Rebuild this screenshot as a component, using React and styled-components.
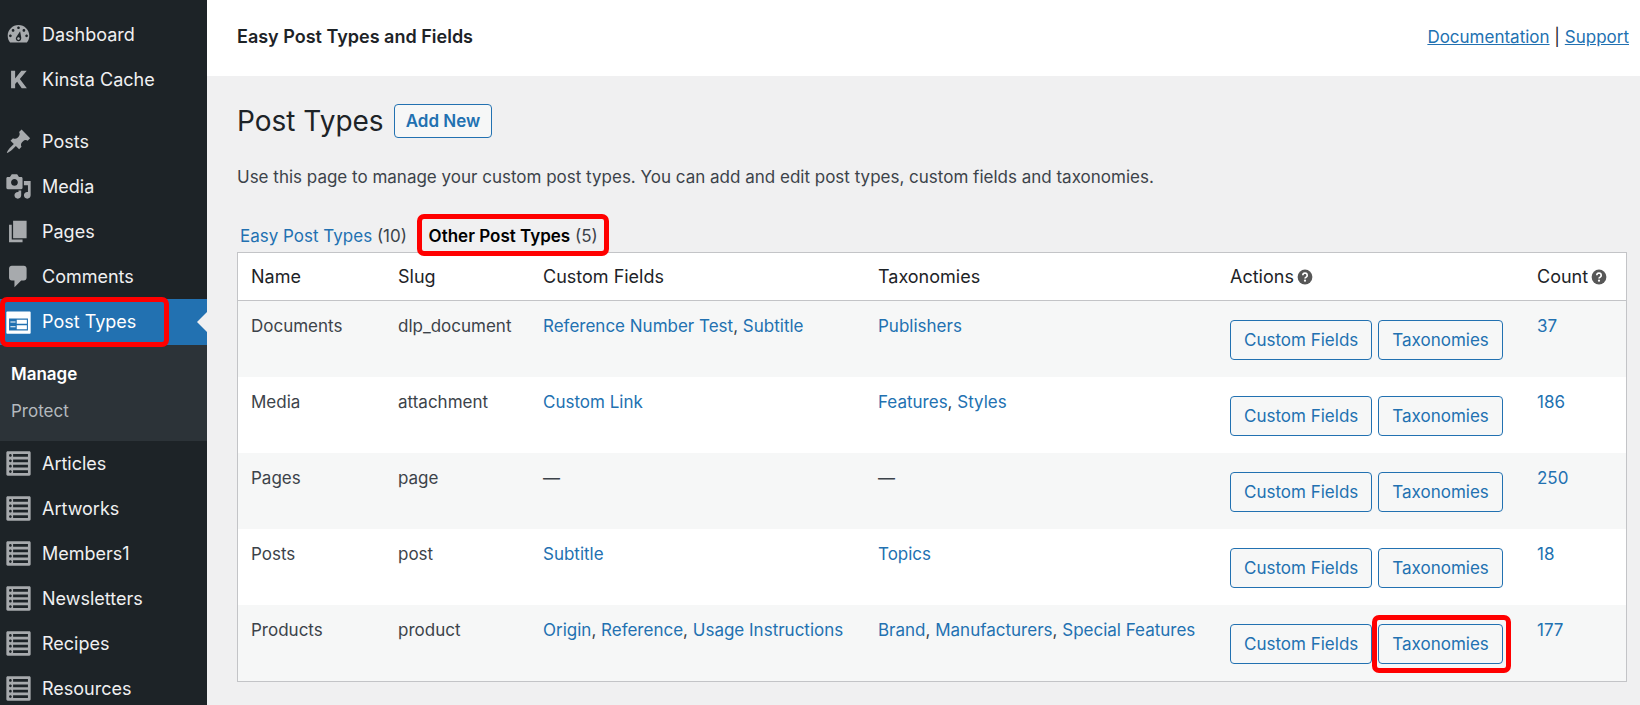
import React from "react";
import styled, { createGlobalStyle, css } from "styled-components";

const GlobalStyle = createGlobalStyle`
  *, *::before, *::after { box-sizing: border-box; }
  body {
    margin: 0;
    background: #f0f0f1;
    color: #3c434a;
    font-family: Inter, "Liberation Sans", sans-serif;
    font-size: 17px;
    line-height: 24px;
  }
  a { color: #2271b1; text-decoration: none; }
  ul { list-style: none; margin: 0; padding: 0; }
`;

const Page = styled.div`
  display: flex;
  min-height: 100vh;
`;

const Sidebar = styled.nav`
  flex: 0 0 207px;
  padding: 12px 0 0;
  background: #1d2327;
`;

const MenuGroup = styled.ul`
  margin-bottom: ${(p) => p.$gap || 0}px;
`;

const MenuItem = styled.li`
  position: relative;
`;

const MenuLink = styled.a`
  display: flex;
  align-items: center;
  gap: 10px;
  height: ${(p) => (p.$active ? 46 : 45)}px;
  padding-left: 5px;
  font-size: 18px;
  color: #f0f0f1;
  svg { width: 27px; height: 27px; fill: #a7aaad; flex: none; }
  ${(p) =>
    p.$active &&
    css`
      background: #2271b1;
      color: #fff;
      svg { fill: #fff; }
      &::after {
        content: "";
        margin-left: auto;
        border: 10px solid transparent;
        border-left: 0;
        border-right-color: #f0f0f1;
      }
    `}
`;

const Submenu = styled.ul`
  padding: 11px 0;
  background: #2c3338;
`;

const SubmenuLink = styled.a`
  display: block;
  padding-left: 11px;
  line-height: 37px;
  font-size: 17px;
  color: ${(p) => (p.$current ? "#fff" : "#b4b9be")};
  font-weight: ${(p) => (p.$current ? 600 : 400)};
`;

const Highlight = styled.span`
  position: absolute;
  inset: ${(p) => p.$inset};
  border: 5px solid #ff0000;
  border-radius: 7px;
  pointer-events: none;
`;

const Content = styled.div`
  flex: 1;
  min-width: 0;
`;

const TopBar = styled.header`
  display: flex;
  align-items: center;
  justify-content: space-between;
  height: 76px;
  padding: 0 11px 3px 30px;
  background: #fff;
  color: #1d2327;
`;

const PluginName = styled.strong`
  font-size: 18px;
  font-weight: 600;
`;

const HelpLinks = styled.div`
  a { text-decoration: underline; }
`;

const Main = styled.main`
  padding: 25px 13px 23px 30px;
`;

const Heading = styled.div`
  display: flex;
  align-items: center;
  gap: 10px;
  height: 40px;
`;

const Title = styled.h1`
  margin: 0;
  font-size: 28px;
  font-weight: 400;
  line-height: 40px;
  color: #1d2327;
`;

const Button = styled.button`
  height: ${(p) => (p.$compact ? 34 : 40)}px;
  padding: 0 ${(p) => (p.$compact ? 11 : 13)}px;
  border: 1px solid #2271b1;
  border-radius: 4px;
  background: #f6f7f7;
  color: #2271b1;
  font-family: inherit;
  font-size: 17px;
  font-weight: ${(p) => (p.$compact ? 600 : 400)};
  white-space: nowrap;
`;

const Intro = styled.p`
  margin: 24px 0 35px;
`;

const Filters = styled.ul`
  display: flex;
  gap: 9px;
  padding-left: 3px;
  margin-bottom: 4px;
`;

const Filter = styled.li`
  position: relative;
  & + &::before {
    content: "|";
    color: #a7aaad;
    margin-right: 7px;
  }
`;

const FilterLink = styled.a`
  ${(p) =>
    p.$current &&
    css`
      color: #000;
      font-weight: 600;
    `}
`;

const Table = styled.table`
  width: 100%;
  table-layout: fixed;
  border: 1px solid #c3c4c7;
  border-spacing: 0;
  background: #fff;
`;

const HeadCell = styled.th`
  width: ${(p) => p.$width || "auto"};
  height: 48px;
  padding: 0 0 0 13px;
  border-bottom: 1px solid #c3c4c7;
  font-size: 18px;
  font-weight: 400;
  text-align: left;
  white-space: nowrap;
  color: #1d2327;
  svg { width: 16px; height: 16px; margin-left: 3px; vertical-align: -2px; }
`;

const Row = styled.tr`
  height: 76px;
  &:nth-child(odd) { background: #f6f7f7; }
`;

const Cell = styled.td`
  padding: 13px 0 0 13px;
  vertical-align: top;
`;

const Actions = styled.div`
  display: flex;
  gap: 6px;
  padding-top: 6px;
`;

const ActionSlot = styled.span`
  position: relative;
`;

const icons = {
  dashboard:
    "M3.76 16h12.48c1.1-1.37 1.76-3.11 1.76-5 0-4.42-3.58-8-8-8s-8 3.58-8 8c0 1.89.66 3.63 1.76 5zM10 4c.55 0 1 .45 1 1s-.45 1-1 1-1-.45-1-1 .45-1 1-1zM6 6c.55 0 1 .45 1 1s-.45 1-1 1-1-.45-1-1 .45-1 1-1zm8 0c.55 0 1 .45 1 1s-.45 1-1 1-1-.45-1-1 .45-1 1-1zM11.200 7.500L12 12v1c0 1.100-.9 2-2 2s-2-.9-2-2c0-.57.24-1.080.63-1.450zM4 10c.55 0 1 .45 1 1s-.45 1-1 1-1-.45-1-1 .45-1 1-1zm12 0c.55 0 1 .45 1 1s-.45 1-1 1-1-.45-1-1 .45-1 1-1zm-5 3c0-.55-.45-1-1-1s-1 .45-1 1 .45 1 1 1 1-.45 1-1z",
  kinsta: "M4.500 3.500h3v5.700l4.600-5.700h4L11 9.600l5.200 6.900h-3.800l-3.400-4.800-1.500 1.700v3.100h-3z",
  pin: "M10.44 3.02l1.82-1.82 6.36 6.35-1.83 1.82c-1.05-.68-2.48-.57-3.41.36l-.75.75c-.92.93-1.04 2.35-.35 3.41l-1.83 1.82-2.41-2.41-2.8 2.79c-.42.42-3.38 2.71-3.8 2.29s1.86-3.39 2.28-3.81l2.79-2.79L4.1 9.36l1.83-1.82c1.05.69 2.48.57 3.4-.36l.75-.75c.93-.92 1.05-2.35.36-3.41z",
  media:
    "M13 11V4c0-.55-.45-1-1-1h-1.67L9 1H5L3.67 3H2c-.55 0-1 .45-1 1v7c0 .55.45 1 1 1h10c.55 0 1-.45 1-1zM7 4.5c1.38 0 2.5 1.12 2.5 2.5S8.38 9.5 7 9.5 4.5 8.38 4.5 7 5.62 4.5 7 4.5zM14 6h5v10.5c0 1.38-1.12 2.5-2.5 2.5S14 17.88 14 16.5s1.12-2.5 2.5-2.5c.17 0 .34.02.5.05V9h-3V6zm-4 8.05V13h2v3.5c0 1.38-1.12 2.5-2.5 2.5S7 17.88 7 16.5 8.12 14 9.5 14c.17 0 .34.02.5.05z",
  pages: "M6 15V2h10v13H6zm-1 1h8v2H3V5h2v11z",
  comments: "M5 2h9c1.1 0 2 .9 2 2v7c0 1.1-.9 2-2 2h-2l-5 5v-5H5c-1.1 0-2-.9-2-2V4c0-1.1.9-2 2-2z",
  types:
    "M1.600 1.800h16.800c.3 0 .6.3.6.6v15.300c0 .3-.3.6-.6.6H1.600c-.3 0-.6-.3-.6-.6V2.400c0-.3.3-.6.6-.6zM3 7v9h14V7H3zM4 9.200h3.800v.8H4zM8.700 8h7.500v2.900H8.700zM4 12.800h3.800v.8H4zM8.700 12.100h7.500V15H8.700z",
  list: "M2 19h16c.55 0 1-.45 1-1V2c0-.55-.45-1-1-1H2c-.55 0-1 .45-1 1v16c0 .55.45 1 1 1zM4 3c.55 0 1 .45 1 1s-.45 1-1 1-1-.45-1-1 .45-1 1-1zm13 0v2H6V3h11zM4 7c.55 0 1 .45 1 1s-.45 1-1 1-1-.45-1-1 .45-1 1-1zm13 0v2H6V7h11zM4 11c.55 0 1 .45 1 1s-.45 1-1 1-1-.45-1-1 .45-1 1-1zm13 0v2H6v-2h11zM4 15c.55 0 1 .45 1 1s-.45 1-1 1-1-.45-1-1 .45-1 1-1zm13 0v2H6v-2h11z",
};

const Icon = ({ name }) => (
  <svg viewBox="0 0 20 20" aria-hidden="true">
    <path fillRule="evenodd" d={icons[name]} />
  </svg>
);

const HelpIcon = () => (
  <svg viewBox="0 0 16 16" role="img" aria-label="Help">
    <circle cx="8" cy="8" r="7.400" fill="#575757" />
    <path d="M5.800 6.200a2.200 2.200 0 1 1 3.400 1.900c-.8.5-1.200.8-1.200 1.500" fill="none" stroke="#fff" strokeWidth="1.700" />
    <circle cx="8" cy="11.700" r="1.100" fill="#fff" />
  </svg>
);

const Item = ({ icon, label, active, children }) => (
  <MenuItem>
    <MenuLink href="#" $active={active}>
      <Icon name={icon} />
      {label}
    </MenuLink>
    {children}
  </MenuItem>
);

const rows = [
  ["Documents", "dlp_document", ["Reference Number Test", "Subtitle"], ["Publishers"], 37],
  ["Media", "attachment", ["Custom Link"], ["Features", "Styles"], 186],
  ["Pages", "page", [], [], 250],
  ["Posts", "post", ["Subtitle"], ["Topics"], 18],
  ["Products", "product", ["Origin", "Reference", "Usage Instructions"], ["Brand", "Manufacturers", "Special Features"], 177],
];

const Links = ({ items }) =>
  items.length === 0
    ? "—"
    : items.map((item, i) => (
        <React.Fragment key={item}>
          {i > 0 && ", "}
          <a href="#">{item}</a>
        </React.Fragment>
      ));

export default function App() {
  return (
    <Page>
      <GlobalStyle />
      <Sidebar>
        <MenuGroup $gap={17}>
          <Item icon="dashboard" label="Dashboard" />
          <Item icon="kinsta" label="Kinsta Cache" />
        </MenuGroup>
        <MenuGroup>
          <Item icon="pin" label="Posts" />
          <Item icon="media" label="Media" />
          <Item icon="pages" label="Pages" />
          <Item icon="comments" label="Comments" />
          <Item icon="types" label="Post Types" active>
            <Highlight $inset="-2px 38px -2px 0" />
          </Item>
        </MenuGroup>
        <Submenu>
          <li><SubmenuLink href="#" $current>Manage</SubmenuLink></li>
          <li><SubmenuLink href="#">Protect</SubmenuLink></li>
        </Submenu>
        <MenuGroup>
          {["Articles", "Artworks", "Members1", "Newsletters", "Recipes", "Resources"].map((label) => (
            <Item key={label} icon="list" label={label} />
          ))}
        </MenuGroup>
      </Sidebar>
      <Content>
        <TopBar>
          <PluginName>Easy Post Types and Fields</PluginName>
          <HelpLinks>
            <a href="#">Documentation</a> | <a href="#">Support</a>
          </HelpLinks>
        </TopBar>
        <Main>
          <Heading>
            <Title>Post Types</Title>
            <Button type="button" $compact>Add New</Button>
          </Heading>
          <Intro>
            Use this page to manage your custom post types. You can add and edit post types, custom fields and taxonomies.
          </Intro>
          <Filters>
            <Filter>
              <FilterLink href="#">Easy Post Types</FilterLink> (10)
            </Filter>
            <Filter>
              <FilterLink href="#" $current>Other Post Types</FilterLink> (5)
              <Highlight $inset="-10px -11px -8px 1px" />
            </Filter>
          </Filters>
          <Table>
            <thead>
              <tr>
                <HeadCell $width="147px">Name</HeadCell>
                <HeadCell $width="145px">Slug</HeadCell>
                <HeadCell $width="335px">Custom Fields</HeadCell>
                <HeadCell>Taxonomies</HeadCell>
                <HeadCell $width="307px">Actions<HelpIcon /></HeadCell>
                <HeadCell $width="102px">Count<HelpIcon /></HeadCell>
              </tr>
            </thead>
            <tbody>
              {rows.map(([name, slug, fields, taxonomies, count]) => (
                <Row key={slug}>
                  <Cell>{name}</Cell>
                  <Cell>{slug}</Cell>
                  <Cell><Links items={fields} /></Cell>
                  <Cell><Links items={taxonomies} /></Cell>
                  <Cell>
                    <Actions>
                      <Button type="button">Custom Fields</Button>
                      <ActionSlot>
                        <Button type="button">Taxonomies</Button>
                        {slug === "product" && <Highlight $inset="-9px -8px -9px -6px" />}
                      </ActionSlot>
                    </Actions>
                  </Cell>
                  <Cell><a href="#">{count}</a></Cell>
                </Row>
              ))}
            </tbody>
          </Table>
        </Main>
      </Content>
    </Page>
  );
}
